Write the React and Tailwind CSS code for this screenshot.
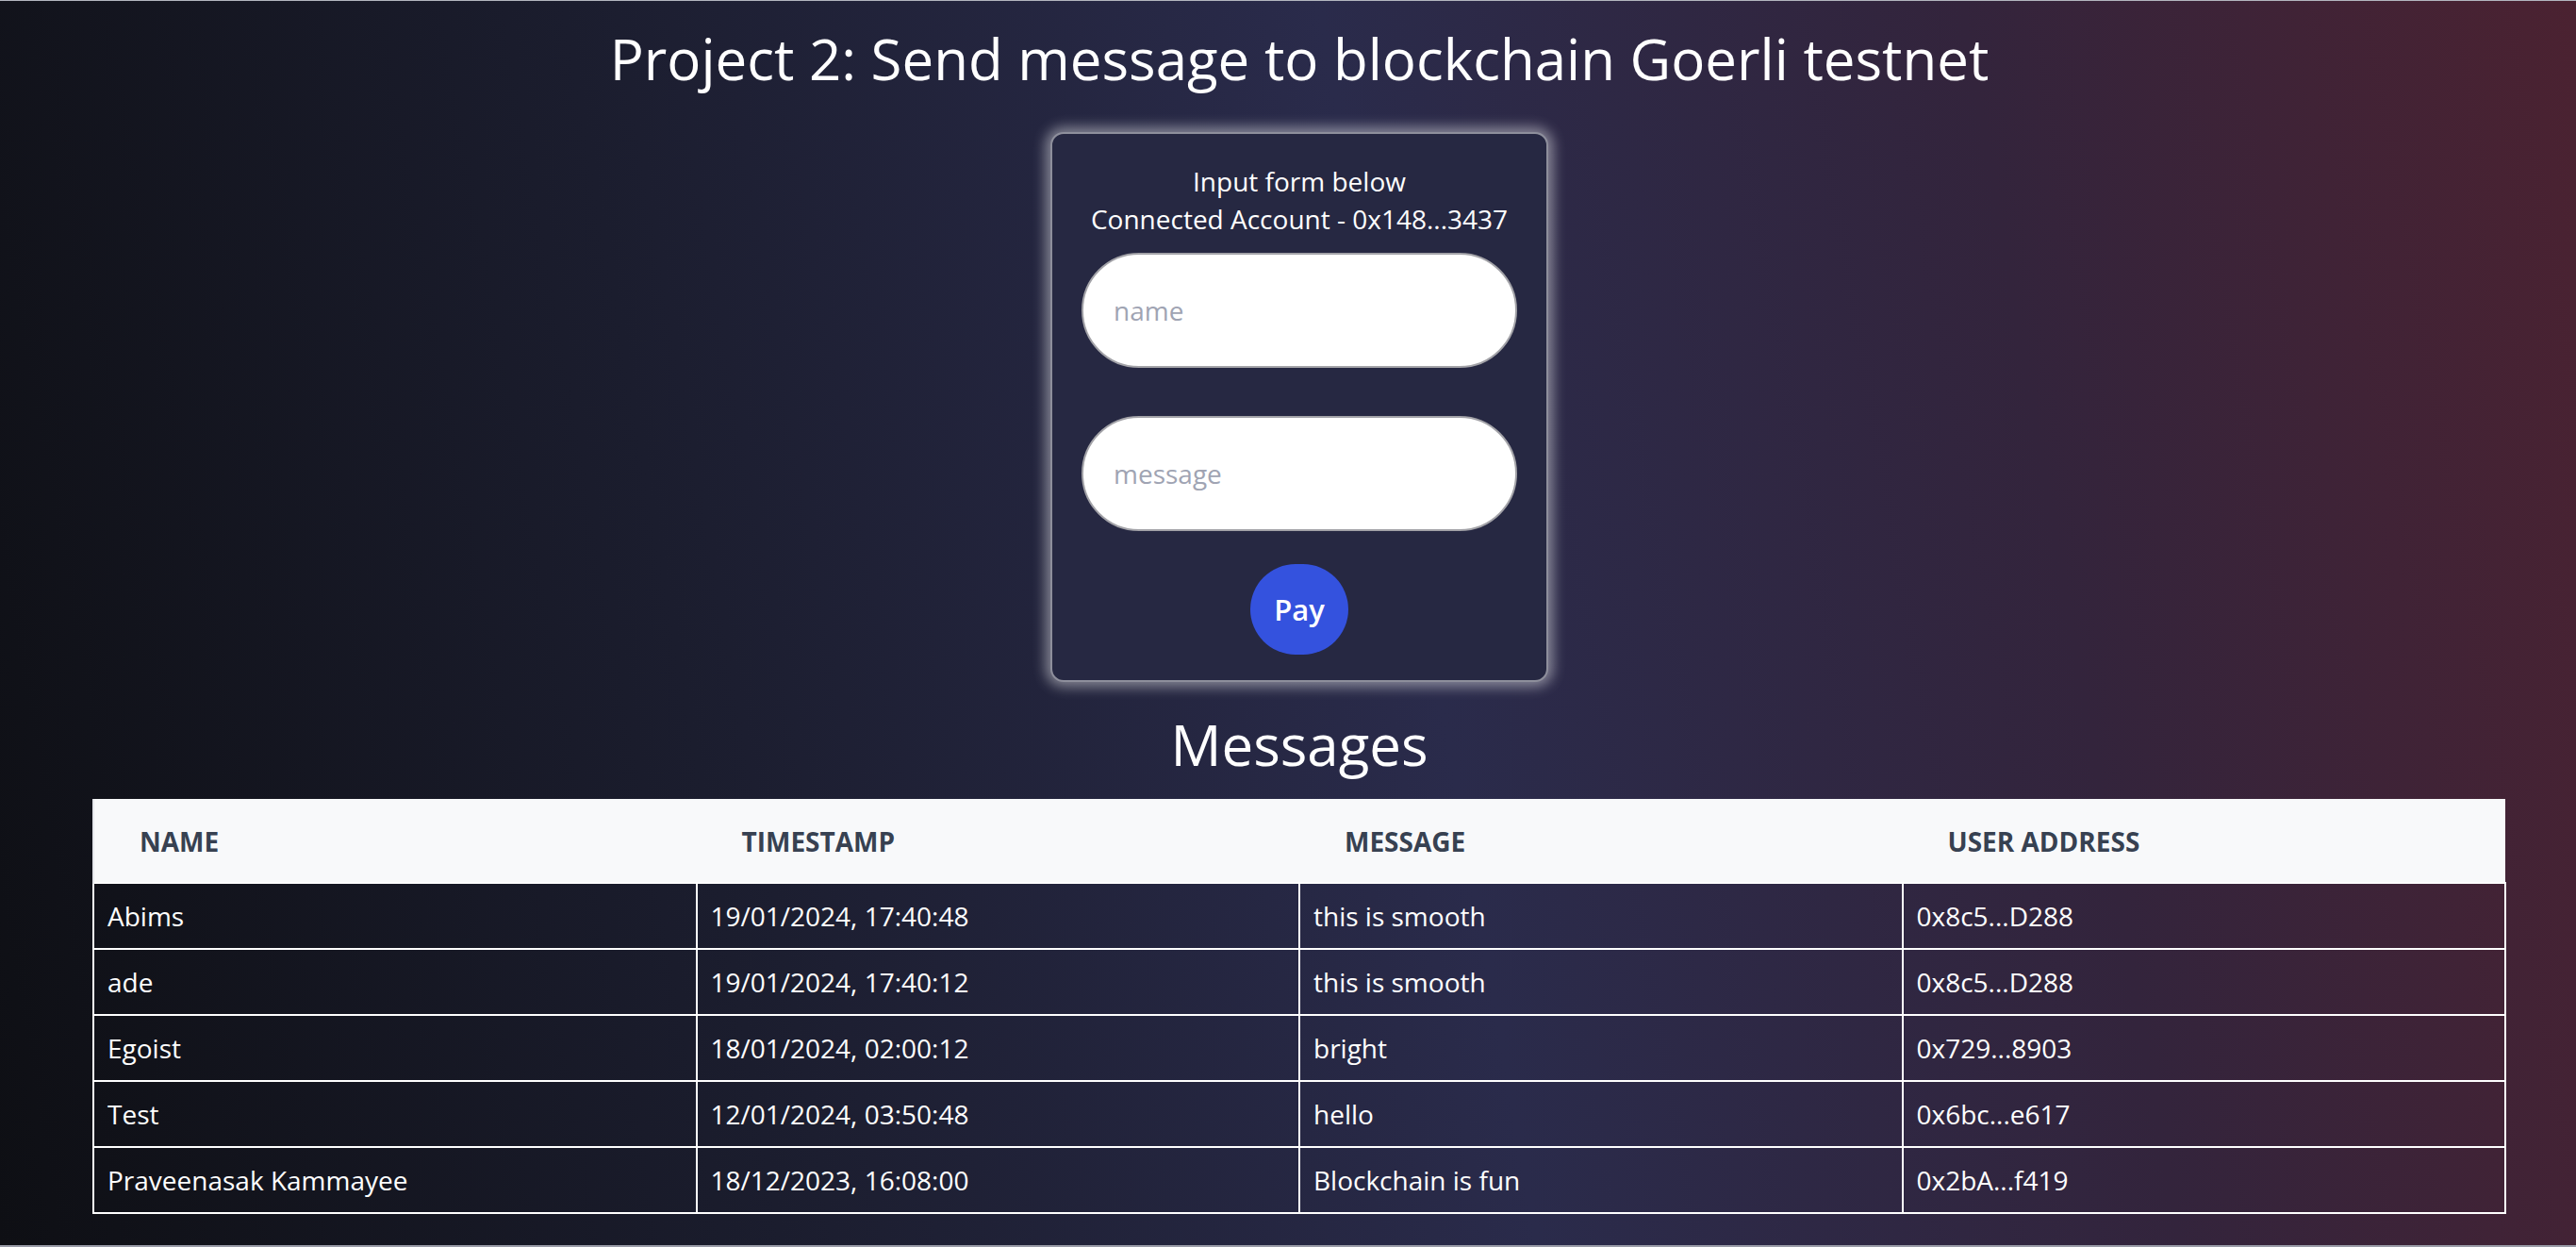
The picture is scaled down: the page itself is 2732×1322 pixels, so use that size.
import React from "react";

const rows = [
  ["Abims", "19/01/2024, 17:40:48", "this is smooth", "0x8c5...D288"],
  ["ade", "19/01/2024, 17:40:12", "this is smooth", "0x8c5...D288"],
  ["Egoist", "18/01/2024, 02:00:12", "bright", "0x729...8903"],
  ["Test", "12/01/2024, 03:50:48", "hello", "0x6bc...e617"],
  ["Praveenasak Kammayee", "18/12/2023, 16:08:00", "Blockchain is fun", "0x2bA...f419"],
];

export default function App() {
  return (
    <div
      className="h-[1322px] w-full overflow-hidden border-t border-b-2 border-t-[#b3b6bf] border-b-[#9a9ca8] bg-[linear-gradient(80deg,#0e0f14_0%,#1b1d2e_28%,#2a2b4b_55%,#33243c_78%,#4b2231_100%)] text-white"
      style={{ fontFamily: '"Open Sans", "Noto Sans", sans-serif' }}
    >
      <div className="flex flex-col items-center pl-[24px] pt-[25px]">
        <h1 className="text-[60px] leading-[72px] font-normal">
          Project 2: Send message to blockchain Goerli testnet
        </h1>

        <div className="mt-[42px] flex w-[528px] flex-col items-center rounded-[14px] border-2 border-[#8e8f9c] bg-[#262842] px-[31px] pt-[30px] pb-[27px] shadow-[0_0_14px_5px_rgba(255,255,255,0.45)]">
          <p className="text-[28px] leading-[40px] text-center">Input form below</p>
          <p className="text-[28px] leading-[40px] text-center">Connected Account - 0x148...3437</p>
          <input
            className="mt-[16px] h-[122px] w-full rounded-full border-2 border-[#a3a3a8] bg-white pl-[32px] text-[28px] text-gray-800 outline-none placeholder:text-[#a0a4b3]"
            placeholder="name"
          />
          <input
            className="mt-[51px] h-[122px] w-full rounded-full border-2 border-[#a3a3a8] bg-white pl-[32px] text-[28px] text-gray-800 outline-none placeholder:text-[#a0a4b3]"
            placeholder="message"
          />
          <button className="mt-[35px] flex h-[96px] w-[104px] items-center justify-center rounded-full bg-[#3452de] text-[31px] font-semibold text-white">
            Pay
          </button>
        </div>

        <h2 className="mt-[30px] text-[60px] leading-[72px] font-normal">Messages</h2>

        <div className="mt-[22px] w-[2560px]">
          <table className="w-full table-fixed border-collapse">
            <thead>
              <tr className="h-[89px] bg-[#f8f9fa]">
                {["NAME", "TIMESTAMP", "MESSAGE", "USER ADDRESS"].map((h, i) => (
                  <th
                    key={h}
                    className={`px-[48px] pt-[2px] text-left text-[28px] font-bold uppercase text-[#374151] ${i === 0 ? "border-l-2 border-l-[#e5e7eb]" : ""}`}
                  >
                    {h}
                  </th>
                ))}
              </tr>
            </thead>
            <tbody>
              {rows.map((r, ri) => (
                <tr key={ri} className="h-[70px]">
                  {r.map((c, ci) => (
                    <td key={ci} className="border-2 border-white px-[14px] text-[28px] leading-[40px] text-white">
                      {c}
                    </td>
                  ))}
                </tr>
              ))}
            </tbody>
          </table>
        </div>
      </div>
    </div>
  );
}
